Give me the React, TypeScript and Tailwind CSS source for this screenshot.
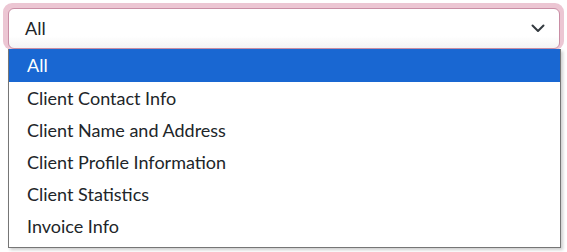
import React from "react";

const items = [
  "All",
  "Client Contact Info",
  "Client Name and Address",
  "Client Profile Information",
  "Client Statistics",
  "Invoice Info",
];

export default function App() {
  return (
    <div
      className="w-[567px] h-[252px] bg-white relative"
      style={{ fontFamily: 'Lato, "Noto Sans", sans-serif' }}
    >
      <div className="absolute left-[3px] top-[3px] w-[561px] h-[47px] rounded-[9px] bg-[#ecc6d3]" />
      <div className="absolute left-[8px] top-[8px] w-[552px] h-[41px] rounded-[6px] border border-[#c98ea5] bg-gradient-to-b from-white from-70% to-[#f3f3f3] flex items-center pl-[16px] pr-[14px] text-[18px] text-[#212529]">
        <span className="flex-1">All</span>
        <svg width="14" height="9" viewBox="0 0 14 9">
          <path d="M1.5 1.5 L7 7 L12.5 1.5" fill="none" stroke="#343a40" strokeWidth="2" strokeLinecap="round" strokeLinejoin="round" />
        </svg>
      </div>
      <div className="absolute left-[8px] top-[49px] w-[553px] h-[199px] bg-white border border-[#767676] border-t-0 shadow-[2px_2px_3px_rgba(0,0,0,0.2)] text-[18px] text-[#212529]">
        {items.map((t, i) => (
          <div
            key={t}
            className={
              "h-[32px] flex items-center pl-[18px] " +
              (i === 0 ? "bg-[#1967d2] text-white h-[33px]" : "")
            }
          >
            {t}
          </div>
        ))}
      </div>
    </div>
  );
}
